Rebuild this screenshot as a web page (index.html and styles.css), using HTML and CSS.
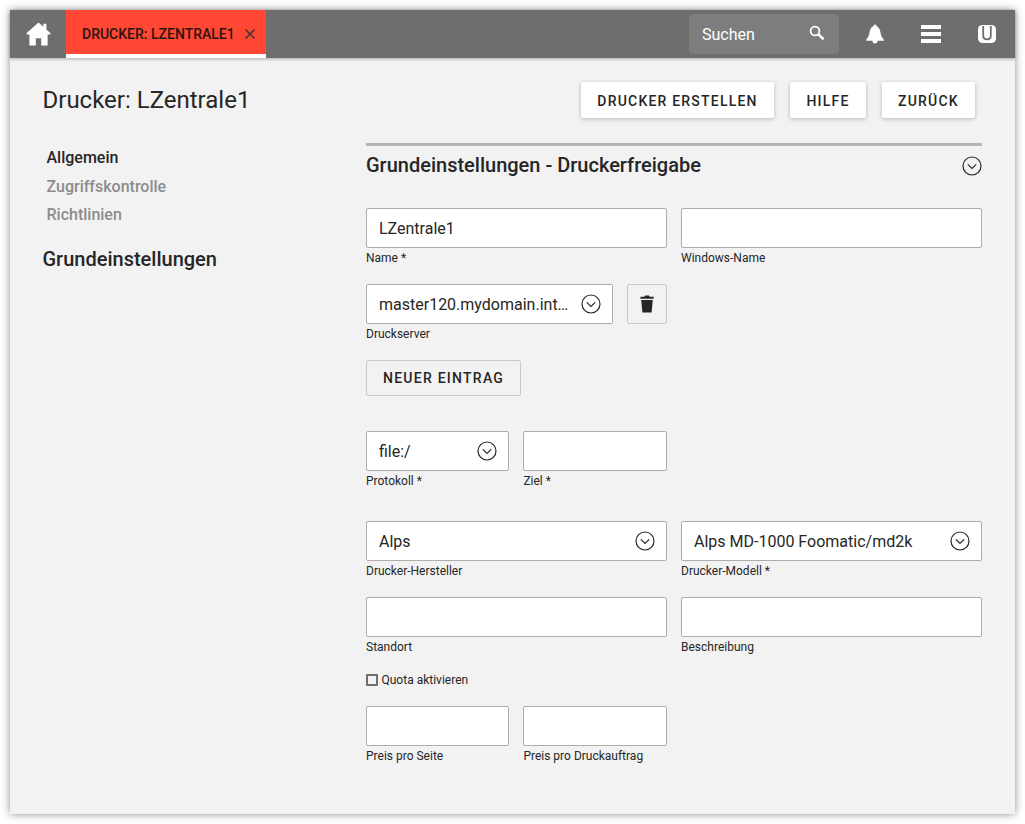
FILE: index.html
```html
<!DOCTYPE html>
<html lang="de">
<head>
<meta charset="UTF-8" />
<meta name="viewport" content="width=device-width, initial-scale=1.0">
<title>Drucker: LZentrale1</title>
<link rel="stylesheet" href="styles.css">
</head>
<body>
<div class="window">

  <!-- KOPFLEISTE -->
  <header class="topbar">
    <a class="home-btn">
      <svg width="25" height="24" viewBox="0 0 25 24"><path fill="#fff" d="M12.5 .6 L17.4 4.8 V1.8 H20.4 V7.4 L24.8 11.6 L24 12.6 H21.6 V23.4 H15.2 V16.2 H9.8 V23.4 H3.4 V12.6 H1 L.2 11.6 Z"/></svg>
    </a>
    <div class="tab">
      <span class="tab-title">DRUCKER: LZENTRALE1</span>
      <svg class="tab-close" width="12" height="12" viewBox="0 0 12 12"><path d="M1.5 1.5 L10.5 10.5 M10.5 1.5 L1.5 10.5" stroke="#4a3330" stroke-width="1.7" fill="none"/></svg>
    </div>
    <div class="search">
      <span>Suchen</span>
      <svg class="search-icon" width="16" height="16" viewBox="0 0 16 16"><circle cx="6" cy="6" r="4.4" fill="none" stroke="#fff" stroke-width="1.8"/><path d="M9.4 9.4 L14.6 14.2" stroke="#fff" stroke-width="2.6" fill="none"/></svg>
    </div>
    <a class="top-icon">
      <svg width="18" height="20" viewBox="0 0 18 20"><path fill="#fff" d="M9 .4 C10 .4 10.6 1.2 10.7 2.2 C13 3.2 14 5.4 14.4 8 C14.9 11.4 15.8 13.6 17.8 15.6 V16.8 H11.6 C11.4 18.6 10.4 19.6 9 19.6 C7.6 19.6 6.6 18.6 6.4 16.8 H.2 V15.6 C2.2 13.6 3.1 11.4 3.6 8 C4 5.4 5 3.2 7.3 2.2 C7.4 1.2 8 .4 9 .4 Z"/></svg>
    </a>
    <a class="top-icon">
      <svg width="20" height="18" viewBox="0 0 20 18"><path fill="#fff" d="M0 0 H20 V4 H0 Z M0 7 H20 V11 H0 Z M0 14 H20 V18 H0 Z"/></svg>
    </a>
    <a class="top-icon">
      <svg width="18" height="20" viewBox="0 0 18 20"><rect x="0" y="1" width="18" height="18" rx="4.5" fill="#fff"/><path d="M5.2 2 V11.6 C5.2 14 6.6 15.4 9 15.4 C11.4 15.4 12.8 14 12.8 11.6 V2" fill="none" stroke="#6e6e6e" stroke-width="1.8"/></svg>
    </a>
  </header>

  <!-- KOPF DER SEITE -->
  <div class="page-head">
    <h1>Drucker: LZentrale1</h1>
    <div class="actions">
      <button class="btn-raised">DRUCKER ERSTELLEN</button>
      <button class="btn-raised">HILFE</button>
      <button class="btn-raised">ZURÜCK</button>
    </div>
  </div>

  <div class="content">
    <aside class="sidenav">
      <a class="nav-item active">Allgemein</a>
      <a class="nav-item">Zugriffskontrolle</a>
      <a class="nav-item">Richtlinien</a>
      <div class="nav-heading">Grundeinstellungen</div>
    </aside>

    <main class="form">
      <div class="section-head">
        <h2>Grundeinstellungen - Druckerfreigabe</h2>
        <svg class="chevron" width="20" height="20" viewBox="0 0 20 20"><circle cx="10" cy="10" r="9" fill="none" stroke="#262626" stroke-width="1.2"/><path d="M5.8 8.4 L10 12.4 L14.2 8.4" fill="none" stroke="#262626" stroke-width="1.2"/></svg>
      </div>

      <div class="row row-first">
        <div class="field"><div class="input">LZentrale1</div><label>Name *</label></div>
        <div class="field"><div class="input"></div><label>Windows-Name</label></div>
      </div>

      <div class="row">
        <div class="half-row">
          <div class="field grow">
            <div class="input select"><span class="value">master120.mydomain.int…</span>
              <svg class="chevron" width="20" height="20" viewBox="0 0 20 20"><circle cx="10" cy="10" r="9" fill="none" stroke="#262626" stroke-width="1.2"/><path d="M5.8 8.4 L10 12.4 L14.2 8.4" fill="none" stroke="#262626" stroke-width="1.2"/></svg>
            </div>
            <label>Druckserver</label>
          </div>
          <button class="btn-icon">
            <svg width="14" height="18" viewBox="0 0 14 18"><path fill="#262626" d="M5 .4 H9 L9.6 1.8 H13.6 V3.8 H.4 V1.8 H4.4 Z M1.2 5 H12.8 L11.6 17.4 H2.4 Z"/></svg>
          </button>
        </div>
      </div>

      <button class="btn-flat">NEUER EINTRAG</button>

      <div class="row row-gap">
        <div class="half-row even">
          <div class="field">
            <div class="input select"><span class="value">file:/</span>
              <svg class="chevron" width="20" height="20" viewBox="0 0 20 20"><circle cx="10" cy="10" r="9" fill="none" stroke="#262626" stroke-width="1.2"/><path d="M5.8 8.4 L10 12.4 L14.2 8.4" fill="none" stroke="#262626" stroke-width="1.2"/></svg>
            </div>
            <label>Protokoll *</label>
          </div>
          <div class="field"><div class="input"></div><label>Ziel *</label></div>
        </div>
      </div>

      <div class="row row-gap-lg">
        <div class="field">
          <div class="input select"><span class="value">Alps</span>
            <svg class="chevron" width="20" height="20" viewBox="0 0 20 20"><circle cx="10" cy="10" r="9" fill="none" stroke="#262626" stroke-width="1.2"/><path d="M5.8 8.4 L10 12.4 L14.2 8.4" fill="none" stroke="#262626" stroke-width="1.2"/></svg>
          </div>
          <label>Drucker-Hersteller</label>
        </div>
        <div class="field">
          <div class="input select"><span class="value">Alps MD-1000 Foomatic/md2k</span>
            <svg class="chevron" width="20" height="20" viewBox="0 0 20 20"><circle cx="10" cy="10" r="9" fill="none" stroke="#262626" stroke-width="1.2"/><path d="M5.8 8.4 L10 12.4 L14.2 8.4" fill="none" stroke="#262626" stroke-width="1.2"/></svg>
          </div>
          <label>Drucker-Modell *</label>
        </div>
      </div>

      <div class="row">
        <div class="field"><div class="input"></div><label>Standort</label></div>
        <div class="field"><div class="input"></div><label>Beschreibung</label></div>
      </div>

      <div class="check"><span class="box"></span><span>Quota aktivieren</span></div>

      <div class="row">
        <div class="half-row even">
          <div class="field"><div class="input"></div><label>Preis pro Seite</label></div>
          <div class="field"><div class="input"></div><label>Preis pro Druckauftrag</label></div>
        </div>
      </div>
    </main>
  </div>
</div>
</body>
</html>
```

FILE: styles.css
```css
:root{
  --text:#262626;
  --muted:#8c8c8c;
  --border:#adadad;
  --bar:#6e6e6e;
  --accent:#ff4733;
  --bg:#f2f2f2;
}
*,*::before,*::after{box-sizing:border-box;margin:0;padding:0}
body{
  background:#fff;
  padding:10px;
  font-family:Roboto,'Liberation Sans',sans-serif;
  color:var(--text);
}

.window{
  width:1005px;height:804px;
  background:var(--bg);
  box-shadow:0 0 8px rgba(0,0,0,.45);
}

/* KOPFLEISTE */
.topbar{
  display:flex;align-items:center;
  height:48px;
  background:var(--bar);
  box-shadow:0 1px 3px rgba(0,0,0,.3);
}
.home-btn{
  display:flex;align-items:center;justify-content:center;
  width:56px;height:48px;
}
.tab{
  display:flex;align-items:center;
  width:200px;height:48px;
  padding:0 10px 0 16px;
  background:var(--accent);
  box-shadow:inset 0 -4px 0 #fff;
  color:#2b1512;
}
.tab-title{flex:1;font-size:14px;font-weight:500;white-space:nowrap}
.tab-close{flex:none}
.search{
  display:flex;align-items:center;justify-content:space-between;
  width:150px;height:40px;
  margin-left:auto;
  padding:0 14px 0 13px;
  background:#7d7d7d;
  border-radius:4px;
  color:#fff;
  font-size:16px;
}
.search-icon{margin-top:-2px}
.top-icon{
  display:flex;align-items:center;justify-content:center;
  width:56px;height:48px;
}
.search + .top-icon{margin-left:8px}

/* KOPF DER SEITE */
.page-head{
  display:flex;align-items:center;justify-content:space-between;
  height:36px;
  margin-top:24px;
  padding:0 40px 0 32.5px;
}
h1{font-size:24px;font-weight:400;line-height:36px}
.actions{display:grid;grid-template-columns:193px 76px 93px;gap:16px}
.btn-raised{
  height:36px;
  padding-top:1px;
  background:#fff;
  border:0;border-radius:2px;
  box-shadow:0 1px 4px rgba(0,0,0,.25);
  font:500 14px Roboto,sans-serif;
  letter-spacing:1.2px;
  color:var(--text);
}

/* INHALT */
.content{display:flex;margin-top:25px}
.sidenav{
  width:356px;
  padding:1px 0 0 32.5px;
  display:flex;flex-direction:column;
}
.nav-item{
  padding-left:4px;
  font-size:16px;font-weight:500;line-height:28.5px;
  color:var(--muted);
}
.nav-item.active{color:var(--text)}
.nav-heading{margin-top:14px;font-size:20px;font-weight:500;line-height:30px}

.form{width:616px}
.section-head{
  display:flex;align-items:center;justify-content:space-between;
  height:40px;
  border-top:3px solid #b3b3b3;
}
.section-head h2{font-size:20px;font-weight:500;line-height:34px}
.section-head .chevron{margin-top:3px}

.row{
  display:grid;grid-template-columns:301px 301px;column-gap:14px;
  margin-bottom:16px;
}
.row-first{margin-top:25px}
.row-gap{margin-top:35px;margin-bottom:30px}
.row-gap-lg{margin-top:0}
.half-row{display:flex;gap:14px}
.half-row.even{display:grid;grid-template-columns:143.4px 143.6px}
.grow{flex:1;min-width:0}

.field{min-width:0}
.field label{display:block;height:20px;font-size:12px;line-height:21px;color:var(--text)}
.input{
  display:flex;align-items:center;
  height:40px;
  padding:0 12px;
  background:#fff;
  border:1px solid var(--border);
  border-radius:2px;
  font-size:16px;
  white-space:nowrap;
}
.select{padding-right:11px}
.select .value{flex:1;min-width:0}
.select .chevron{flex:none}

.btn-icon{
  display:flex;align-items:center;justify-content:center;
  flex:none;
  width:40px;height:40px;
  background:var(--bg);
  border:1px solid #c8c8c8;
  border-radius:2px;
}
.btn-flat{
  display:block;
  height:36px;
  padding:0 16px;
  background:var(--bg);
  border:1px solid #c8c8c8;
  border-radius:2px;
  font:500 14px Roboto,sans-serif;
  letter-spacing:1.25px;
  color:var(--text);
}

.check{
  display:flex;align-items:center;gap:3.5px;
  height:20px;
  margin:-3px 0 16px;
  font-size:12px;
}
.box{
  width:12px;height:12px;
  border:2px solid #6e6e6e;
  border-radius:1px;
}
```
